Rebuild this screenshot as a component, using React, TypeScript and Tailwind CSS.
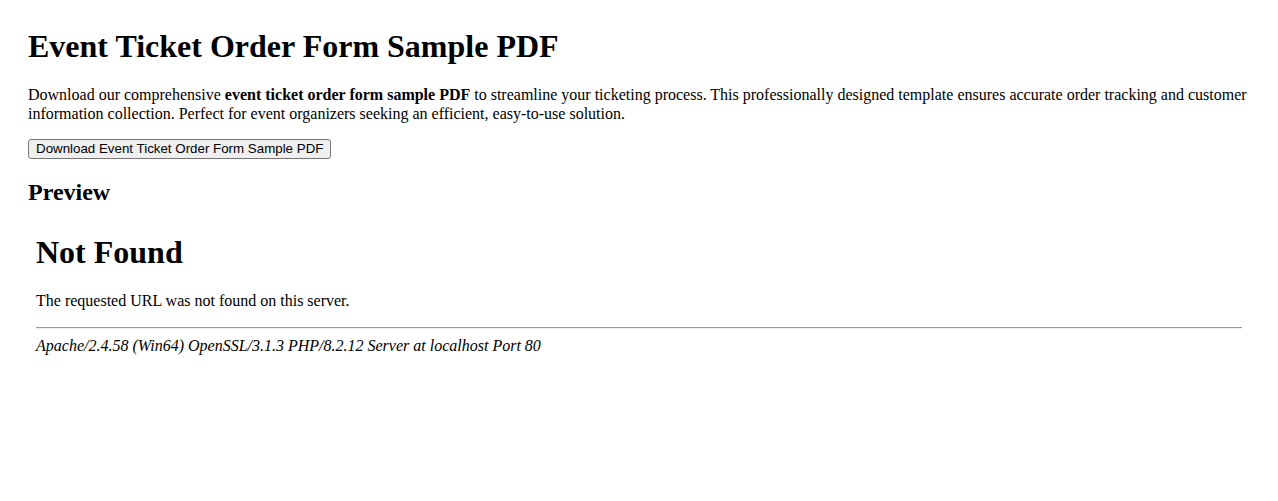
export default function App() {
  return (
    <div className="bg-white p-[28px] font-['Liberation_Serif',serif] text-base text-black">
      <h1 className="mb-[21.44px] text-[32px] font-bold leading-[36.8px]">
        Event Ticket Order Form Sample PDF
      </h1>

      <p className="mb-4 leading-[18.4px]">
        Download our comprehensive <strong>event ticket order form sample PDF</strong> to
        streamline your ticketing process. This professionally designed template ensures accurate
        order tracking and customer information collection. Perfect for event organizers seeking
        an efficient, easy-to-use solution.
      </p>

      <button className="block rounded-[3px] border border-[#767676] bg-[#efefef] px-[7px] py-[1px] font-['Liberation_Sans',sans-serif] text-[13.333px] leading-[16px] text-black">
        Download Event Ticket Order Form Sample PDF
      </button>

      <h2 className="mt-[19.92px] mb-[6px] text-2xl font-bold leading-[27.6px]">Preview</h2>

      {/* embedded 404 page */}
      <div className="h-[259px] w-full px-2">
        <h1 className="pt-[21.44px] pb-[21.44px] text-[32px] font-bold leading-[36.8px]">
          Not Found
        </h1>
        <p className="leading-[18.4px]">The requested URL was not found on this server.</p>
        <hr className="mt-4 mb-2 border-t border-b border-t-[#9a9a9a] border-b-[#eeeeee]" />
        <address className="italic leading-[18.4px]">
          Apache/2.4.58 (Win64) OpenSSL/3.1.3 PHP/8.2.12 Server at localhost Port 80
        </address>
      </div>
    </div>
  );
}
